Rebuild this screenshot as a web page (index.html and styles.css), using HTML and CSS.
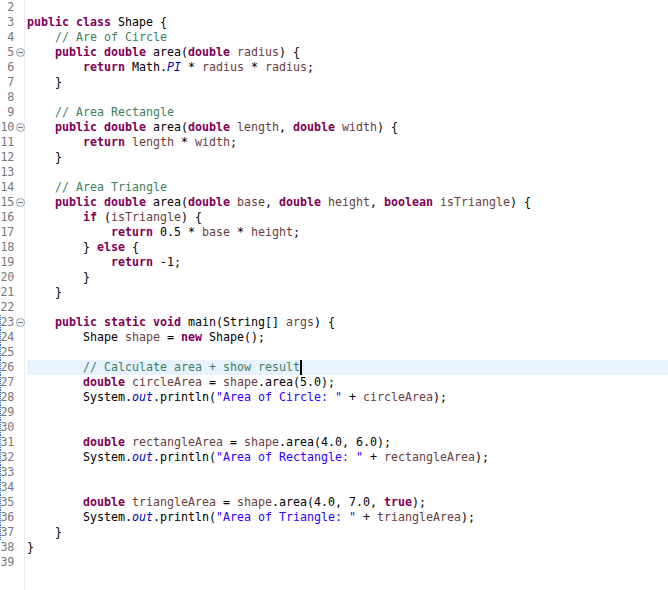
FILE: index.html
```html
<!DOCTYPE html>
<html>
<head>
<meta charset="utf-8">
<link rel="stylesheet" href="styles.css">
</head>
<body>
<div class="editor">
  <div class="gutter">
    <div class="ln"><span class="num">2</span></div>
    <div class="ln"><span class="num">3</span></div>
    <div class="ln"><span class="num">4</span></div>
    <div class="ln"><span class="num">5</span><span class="fold"></span></div>
    <div class="ln"><span class="num">6</span></div>
    <div class="ln"><span class="num">7</span></div>
    <div class="ln"><span class="num">8</span></div>
    <div class="ln"><span class="num">9</span></div>
    <div class="ln"><span class="num">10</span><span class="fold"></span></div>
    <div class="ln"><span class="num">11</span></div>
    <div class="ln"><span class="num">12</span></div>
    <div class="ln"><span class="num">13</span></div>
    <div class="ln"><span class="num">14</span></div>
    <div class="ln"><span class="num">15</span><span class="fold"></span></div>
    <div class="ln"><span class="num">16</span></div>
    <div class="ln"><span class="num">17</span></div>
    <div class="ln"><span class="num">18</span></div>
    <div class="ln"><span class="num">19</span></div>
    <div class="ln"><span class="num">20</span></div>
    <div class="ln"><span class="num">21</span></div>
    <div class="ln"><span class="num">22</span></div>
    <div class="ln chg"><span class="num">23</span><span class="fold"></span></div>
    <div class="ln chg"><span class="num">24</span></div>
    <div class="ln chg"><span class="num">25</span></div>
    <div class="ln chg"><span class="num">26</span></div>
    <div class="ln chg"><span class="num">27</span></div>
    <div class="ln chg"><span class="num">28</span></div>
    <div class="ln chg"><span class="num">29</span></div>
    <div class="ln chg"><span class="num">30</span></div>
    <div class="ln chg"><span class="num">31</span></div>
    <div class="ln chg"><span class="num">32</span></div>
    <div class="ln chg"><span class="num">33</span></div>
    <div class="ln chg"><span class="num">34</span></div>
    <div class="ln chg"><span class="num">35</span></div>
    <div class="ln chg"><span class="num">36</span></div>
    <div class="ln chg"><span class="num">37</span></div>
    <div class="ln"><span class="num">38</span></div>
    <div class="ln"><span class="num">39</span></div>
  </div>
  <div class="code">
<div class="row"> </div>
<div class="row"><span class="kw">public</span> <span class="kw">class</span> Shape {</div>
<div class="row">    <span class="cm">// Are of Circle</span></div>
<div class="row">    <span class="kw">public</span> <span class="kw">double</span> area(<span class="kw">double</span> <span class="v">radius</span>) {</div>
<div class="row">        <span class="kw">return</span> Math.<span class="fd">PI</span> * <span class="v">radius</span> * <span class="v">radius</span>;</div>
<div class="row">    }</div>
<div class="row"> </div>
<div class="row">    <span class="cm">// Area Rectangle</span></div>
<div class="row">    <span class="kw">public</span> <span class="kw">double</span> area(<span class="kw">double</span> <span class="v">length</span>, <span class="kw">double</span> <span class="v">width</span>) {</div>
<div class="row">        <span class="kw">return</span> <span class="v">length</span> * <span class="v">width</span>;</div>
<div class="row">    }</div>
<div class="row"> </div>
<div class="row">    <span class="cm">// Area Triangle</span></div>
<div class="row">    <span class="kw">public</span> <span class="kw">double</span> area(<span class="kw">double</span> <span class="v">base</span>, <span class="kw">double</span> <span class="v">height</span>, <span class="kw">boolean</span> <span class="v">isTriangle</span>) {</div>
<div class="row">        <span class="kw">if</span> (<span class="v">isTriangle</span>) {</div>
<div class="row">            <span class="kw">return</span> 0.5 * <span class="v">base</span> * <span class="v">height</span>;</div>
<div class="row">        } <span class="kw">else</span> {</div>
<div class="row">            <span class="kw">return</span> -1;</div>
<div class="row">        }</div>
<div class="row">    }</div>
<div class="row"> </div>
<div class="row">    <span class="kw">public</span> <span class="kw">static</span> <span class="kw">void</span> main(String[] <span class="v">args</span>) {</div>
<div class="row">        Shape <span class="v">shape</span> = <span class="kw">new</span> Shape();</div>
<div class="row"> </div>
<div class="row current">        <span class="cm">// Calculate area + show result</span><span class="caret"></span></div>
<div class="row">        <span class="kw">double</span> <span class="v">circleArea</span> = <span class="v">shape</span>.area(5.0);</div>
<div class="row">        System.<span class="fd">out</span>.println(<span class="st">"Area of Circle: "</span> + <span class="v">circleArea</span>);</div>
<div class="row"> </div>
<div class="row"> </div>
<div class="row">        <span class="kw">double</span> <span class="v">rectangleArea</span> = <span class="v">shape</span>.area(4.0, 6.0);</div>
<div class="row">        System.<span class="fd">out</span>.println(<span class="st">"Area of Rectangle: "</span> + <span class="v">rectangleArea</span>);</div>
<div class="row"> </div>
<div class="row"> </div>
<div class="row">        <span class="kw">double</span> <span class="v">triangleArea</span> = <span class="v">shape</span>.area(4.0, 7.0, <span class="kw">true</span>);</div>
<div class="row">        System.<span class="fd">out</span>.println(<span class="st">"Area of Triangle: "</span> + <span class="v">triangleArea</span>);</div>
<div class="row">    }</div>
<div class="row">}</div>
<div class="row"> </div>
  </div>
</div>
</body>
</html>
```
FILE: styles.css
```css
html, body {
  margin: 0;
  padding: 0;
  background: #ffffff;
}

.editor {
  display: flex;
  width: 668px;
  height: 590px;
  overflow: hidden;
  font-family: "DejaVu Sans Mono", "Liberation Mono", monospace;
  font-size: 11.63px;
  color: #000000;
}

.gutter {
  width: 25px;
  flex: none;
  border-right: 1px solid #ececec;
  box-sizing: border-box;
  display: flex;
  flex-direction: column;
}

.ln {
  height: 15px;
  line-height: 15px;
  display: flex;
  align-items: center;
  color: #787878;
}

.ln.chg {
  background-image: linear-gradient(#2f6ed6 50%, transparent 50%);
  background-size: 1px 2px;
  background-repeat: repeat-y;
  background-position: 0 0;
}

.num {
  width: 14px;
  flex: none;
  text-align: right;
  white-space: nowrap;
  letter-spacing: -0.3px;
}

.fold {
  flex: none;
  width: 7px;
  height: 7px;
  margin-left: 2px;
  border: 1px solid #9aa3ad;
  border-radius: 50%;
  background: linear-gradient(#6f7985, #6f7985) center / 5px 1px no-repeat, #f2f4f6;
}

.code {
  flex: 1;
  margin-left: 2px;
  display: flex;
  flex-direction: column;
}

.row {
  height: 15px;
  line-height: 15px;
  white-space: pre;
}

.row.current {
  background: #e8f2fe;
}

.caret {
  display: inline-block;
  width: 2px;
  height: 15px;
  background: #000000;
  vertical-align: top;
}

.kw {
  color: #7f0055;
  font-weight: bold;
}

.cm {
  color: #3f7f5f;
}

.st {
  color: #2a00ff;
}

.fd {
  color: #0000c0;
  font-style: italic;
}

.v {
  color: #6a3e3e;
}
```
